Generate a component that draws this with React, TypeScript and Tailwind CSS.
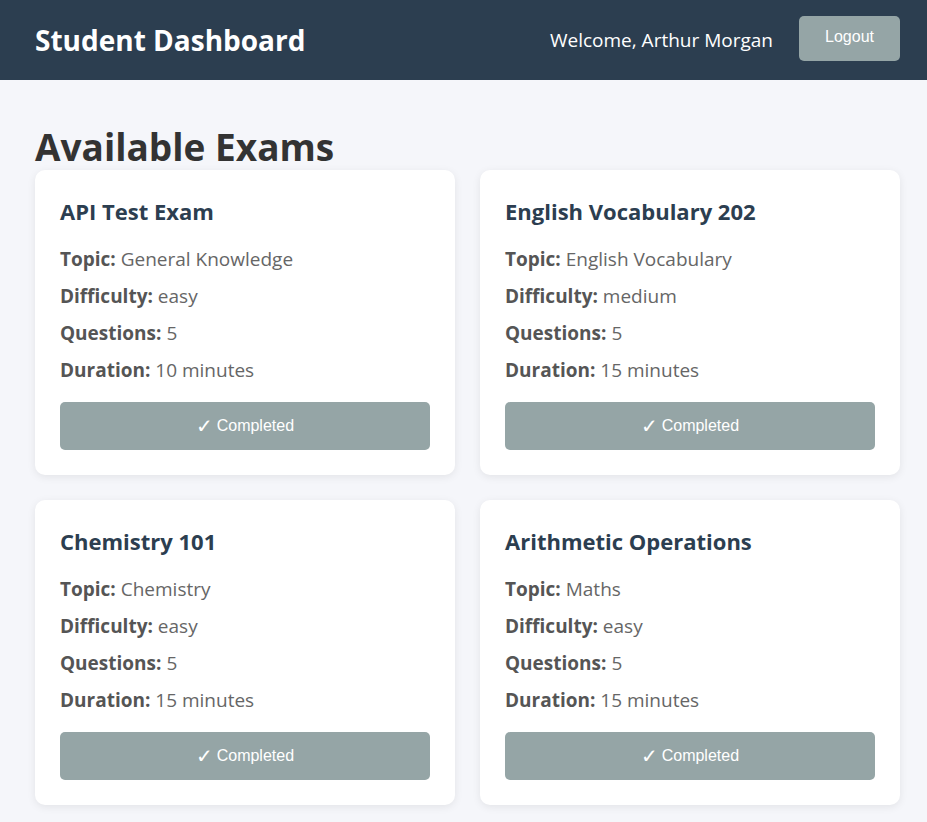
const exams = [
  { title: "API Test Exam", topic: "General Knowledge", difficulty: "easy", questions: 5, duration: 10 },
  { title: "English Vocabulary 202", topic: "English Vocabulary", difficulty: "medium", questions: 5, duration: 15 },
  { title: "Chemistry 101", topic: "Chemistry", difficulty: "easy", questions: 5, duration: 15 },
  { title: "Arithmetic Operations", topic: "Maths", difficulty: "easy", questions: 5, duration: 15 },
];

function Row({ label, value }: { label: string; value: string }) {
  return (
    <p className="text-[19px] leading-[27px] text-[#666]">
      <strong className="font-bold text-[#555]">{label}:</strong> {value}
    </p>
  );
}

export default function App() {
  return (
    <div className="min-h-screen bg-[#f5f6fa] font-['Open_Sans',sans-serif]">
      <header className="h-[80px] bg-[#2c3e50] flex items-center justify-between pl-[35px] pr-[27px]">
        <h1 className="text-[28px] font-bold text-white">Student Dashboard</h1>
        <div className="flex items-center gap-[26px]">
          <span className="text-[19px] text-white">Welcome, Arthur Morgan</span>
          <button className="h-[45px] w-[101px] mb-[4px] rounded-[5px] bg-[#95a5a6] text-white text-[16px] font-['Liberation_Sans',Arial,sans-serif] pb-[3px]">
            Logout
          </button>
        </div>
      </header>

      <main className="px-[35px] pr-[27px] pt-[40px] pb-[20px]">
        <h2 className="text-[37px] leading-[54px] font-bold text-[#333]">Available Exams</h2>
        <div className="grid grid-cols-2 gap-[25px] mt-[-4px]">
          {exams.map((e) => (
            <div key={e.title} className="bg-white rounded-[10px] shadow-[0_2px_8px_rgba(0,0,0,0.08)] px-[25px] pt-[24px] pb-[25px] flex flex-col">
              <h3 className="text-[22px] leading-[34px] font-bold text-[#2c3e50]">{e.title}</h3>
              <div className="mt-[18px] flex flex-col gap-[10px]">
                <Row label="Topic" value={e.topic} />
                <Row label="Difficulty" value={e.difficulty} />
                <Row label="Questions" value={String(e.questions)} />
                <Row label="Duration" value={`${e.duration} minutes`} />
              </div>
              <button className="mt-[18px] h-[48px] w-full rounded-[5px] bg-[#95a5a6] text-white text-[16px] font-['Liberation_Sans',Arial,sans-serif] flex items-center justify-center gap-[4px]">
                <span className="font-['DejaVu_Sans',sans-serif] text-[20px] leading-none">✓</span>
                <span>Completed</span>
              </button>
            </div>
          ))}
        </div>
      </main>
    </div>
  );
}
